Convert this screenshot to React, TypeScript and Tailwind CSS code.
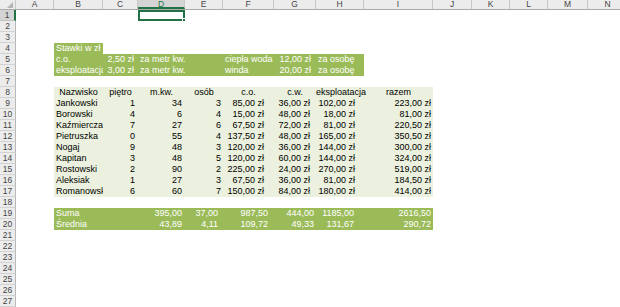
import clsx from "clsx";

const W: Record<string, string> = {
  A: "w-[38px]",
  B: "w-[49px]",
  C: "w-[35px]",
  D: "w-[47px]",
  E: "w-[38px]",
  F: "w-[51px]",
  G: "w-[42px]",
  H: "w-[48px]",
  I: "w-[69px]",
  J: "w-[39px]",
  K: "w-[38px]",
  L: "w-[38px]",
  M: "w-[40px]",
  N: "w-[40px]",
};

const COLS = ["A", "B", "C", "D", "E", "F", "G", "H", "I", "J", "K", "L", "M", "N"];

type CellProps = {
  col: string;
  text?: string;
  align?: "l" | "r" | "c";
  pad?: string;
  clip?: boolean;
};

const Cell = ({ col, text, align = "l", pad, clip }: CellProps) => (
  <div
    className={clsx(
      "shrink-0 h-full whitespace-nowrap",
      W[col],
      align === "r" && "text-right",
      align === "c" && "text-center",
      align === "l" && "pl-[2px]",
      clip ? "overflow-hidden" : "overflow-visible",
      pad
    )}
  >
    {text}
  </div>
);

const Row = ({ n, sel, children }: { n: number; sel?: boolean; children?: React.ReactNode }) => (
  <div className="flex h-[11px] leading-[11px]">
    <div
      className={clsx(
        "w-[16px] shrink-0 border-b text-center text-[8.5px] text-[#444]",
        sel
          ? "bg-[#d4d4d4] border-b-[#c2c2c2] border-r-2 border-r-[#217346]"
          : "bg-[#ececec] border-b-[#d2d2d2] border-r border-r-[#b8b8b8]"
      )}
    >
      {n}
    </div>
    <Cell col="A" />
    {children}
  </div>
);

const people = [
  ["Jankowski", "1", "34", "3", "85,00 zł", "36,00 zł", "102,00 zł", "223,00 zł"],
  ["Borowski", "4", "6", "4", "15,00 zł", "48,00 zł", "18,00 zł", "81,00 zł"],
  ["Kaźmierczak", "7", "27", "6", "67,50 zł", "72,00 zł", "81,00 zł", "220,50 zł"],
  ["Pietruszka", "0", "55", "4", "137,50 zł", "48,00 zł", "165,00 zł", "350,50 zł"],
  ["Nogaj", "9", "48", "3", "120,00 zł", "36,00 zł", "144,00 zł", "300,00 zł"],
  ["Kapitan", "3", "48", "5", "120,00 zł", "60,00 zł", "144,00 zł", "324,00 zł"],
  ["Rostowski", "2", "90", "2", "225,00 zł", "24,00 zł", "270,00 zł", "519,00 zł"],
  ["Aleksiak", "1", "27", "3", "67,50 zł", "36,00 zł", "81,00 zł", "184,50 zł"],
  ["Romanowski", "6", "60", "7", "150,00 zł", "84,00 zł", "180,00 zł", "414,00 zł"],
];

const heads = ["Nazwisko", "piętro", "m.kw.", "osób", "c.o.", "c.w.", "eksploatacja", "razem"];

const App = () => {
  return (
    <div className="h-[307px] w-[620px] overflow-hidden bg-white font-['Liberation_Sans',Arial,sans-serif] text-[9px] text-black">
      {/* column headers */}
      <div className="flex h-[10px] leading-[9px] border-b border-[#ababab] bg-[#ececec] text-[8.5px] text-[#444]">
        <div className="relative w-[16px] shrink-0 border-r border-[#c8c8c8]">
          <svg className="absolute bottom-[1px] right-[2px]" width="6" height="6" viewBox="0 0 6 6">
            <polygon points="6,0 6,6 0,6" fill="#b4b4b4" />
          </svg>
        </div>
        {COLS.map((c) => (
          <div
            key={c}
            className={clsx(
              "shrink-0 text-center border-r border-[#c8c8c8]",
              W[c],
              c === "D" && "bg-[#d4d4d4] border-b-2 border-b-[#217346] text-[#217346]"
            )}
          >
            {c}
          </div>
        ))}
      </div>

      <Row n={1} sel>
        <Cell col="B" />
        <Cell col="C" />
        <div className="relative w-[47px] shrink-0 h-full border-2 border-[#217346]">
          <div className="absolute -bottom-[3px] -right-[3px] h-[4px] w-[4px] bg-[#217346] border border-white" />
        </div>
      </Row>
      <Row n={2} />
      <Row n={3} />
      <Row n={4}>
        <div className="flex h-full bg-[#9bbb59] text-white">
          <Cell col="B" text="Stawki w zł" />
        </div>
      </Row>
      {[
        [5, "c.o.", "2,50 zł", "ciepła woda", "12,00 zł"],
        [6, "eksploatacja", "3,00 zł", "winda", "20,00 zł"],
      ].map(([n, a, b, c, d]) => (
        <Row key={n} n={n as number}>
          <div className="flex h-full w-[310px] bg-[#9bbb59] text-white">
            <Cell col="B" text={a as string} clip />
            <Cell col="C" text={b as string} align="r" pad="pr-[4px]" />
            <Cell col="D" text="za metr kw." />
            <Cell col="E" />
            <Cell col="F" text={c as string} />
            <Cell col="G" text={d as string} align="r" pad="pr-[5px]" />
            <Cell col="H" text="za osobę" />
          </div>
        </Row>
      ))}
      <Row n={7} />
      <Row n={8}>
        <div className="flex h-full w-[379px] bg-[#ebf1de]">
          {heads.map((h, i) => (
            <Cell key={h} col={COLS[i + 1]} text={h} align="c" />
          ))}
        </div>
      </Row>
      {people.map((p, i) => (
        <Row key={p[0]} n={9 + i}>
          <div className="flex h-full w-[379px] bg-[#ebf1de]">
            <Cell col="B" text={p[0]} clip />
            <Cell col="C" text={p[1]} align="r" pad="pr-[3px]" />
            <Cell col="D" text={p[2]} align="r" pad="pr-[3px]" />
            <Cell col="E" text={p[3]} align="r" pad="pr-[2px]" />
            <Cell col="F" text={p[4]} align="r" pad="pr-[10px]" />
            <Cell col="G" text={p[5]} align="r" pad="pr-[6px]" />
            <Cell col="H" text={p[6]} align="r" pad="pr-[9px]" />
            <Cell col="I" text={p[7]} align="r" pad="pr-[2px]" />
          </div>
        </Row>
      ))}
      <Row n={18} />
      {[
        [19, "Suma", "395,00", "37,00", "987,50", "444,00", "1185,00", "2616,50"],
        [20, "Średnia", "43,89", "4,11", "109,72", "49,33", "131,67", "290,72"],
      ].map((r) => (
        <Row key={r[0]} n={r[0] as number}>
          <div className="flex h-full w-[379px] bg-[#9bbb59] text-white">
            <Cell col="B" text={r[1] as string} />
            <Cell col="C" />
            <Cell col="D" text={r[2] as string} align="r" pad="pr-[3px]" />
            <Cell col="E" text={r[3] as string} align="r" pad="pr-[5px]" />
            <Cell col="F" text={r[4] as string} align="r" pad="pr-[6px]" />
            <Cell col="G" text={r[5] as string} align="r" pad="pr-[2px]" />
            <Cell col="H" text={r[6] as string} align="r" pad="pr-[10px]" />
            <Cell col="I" text={r[7] as string} align="r" pad="pr-[2px]" />
          </div>
        </Row>
      ))}
      {[21, 22, 23, 24, 25, 26, 27, 28].map((n) => (
        <Row key={n} n={n} />
      ))}
    </div>
  );
};

export default App;
